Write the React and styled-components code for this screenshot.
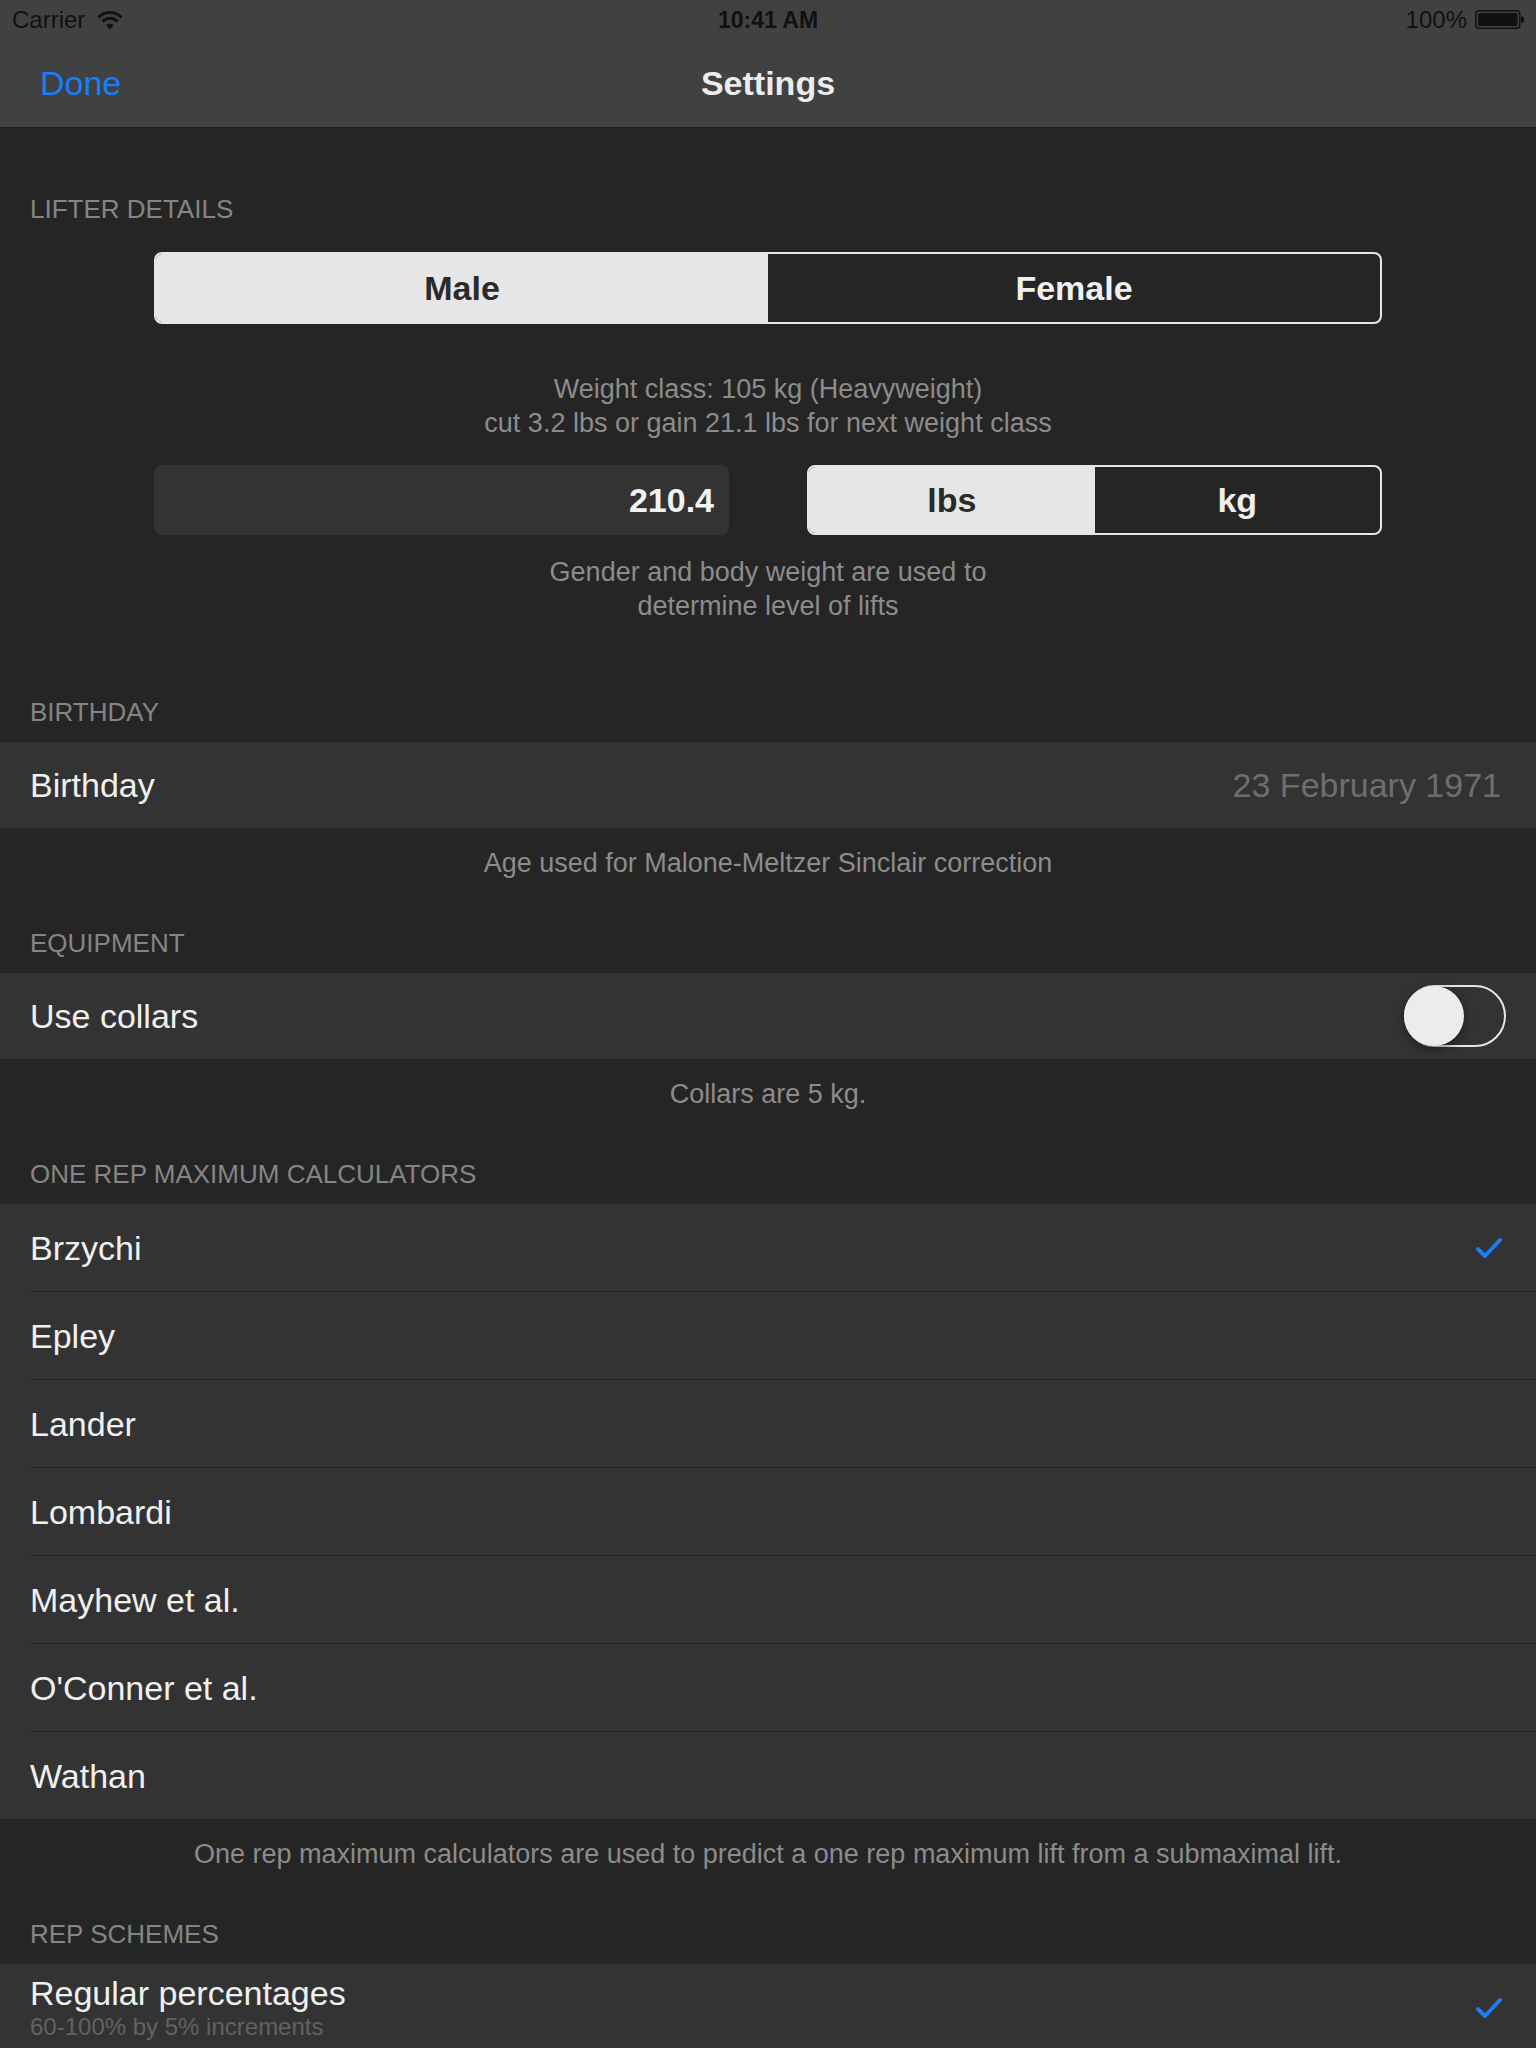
import React from 'react';
import styled, { createGlobalStyle } from 'styled-components';

const GlobalStyle = createGlobalStyle`
  html, body {
    margin: 0;
    padding: 0;
    background: #252525;
  }
  body {
    font-family: "Liberation Sans", Arial, sans-serif;
    -webkit-font-smoothing: antialiased;
  }
`;

const calculators = [
    { name: 'Brzychi', checked: true },
    { name: 'Epley' },
    { name: 'Lander' },
    { name: 'Lombardi' },
    { name: 'Mayhew et al.' },
    { name: "O'Conner et al." },
    { name: 'Wathan' },
];

const WifiIcon = () => (
    <svg width="26" height="19" viewBox="0 0 26 19">
        <path d="M1.5 6.5 A16 16 0 0 1 24.5 6.5" fill="none" stroke="#111" strokeWidth="3" />
        <path d="M5.5 10.5 A10.5 10.5 0 0 1 20.5 10.5" fill="none" stroke="#111" strokeWidth="3" />
        <path d="M9.3 14.2 A5 5 0 0 1 16.7 14.2 L13 18.5 Z" fill="#111" />
    </svg>
);

const Battery = () => (
    <svg width="49" height="20" viewBox="0 0 49 20">
        <rect x="0.75" y="0.75" width="44" height="17.5" rx="3" fill="none" stroke="#111" strokeWidth="1.5" />
        <rect x="3" y="3" width="39.5" height="13" rx="1.5" fill="#111" />
        <path d="M46 6.5 h1.5 a1.5 1.5 0 0 1 1.5 1.5 v3 a1.5 1.5 0 0 1 -1.5 1.5 h-1.5 z" fill="#111" />
    </svg>
);

const Check = () => (
    <svg width="28" height="22" viewBox="0 0 28 22">
        <path d="M3 12 L10 19 L25 3" fill="none" stroke="#1a7ff5" strokeWidth="4" strokeLinecap="round" strokeLinejoin="round" />
    </svg>
);

const App = () => {
    return (
        <Page>
            <GlobalStyle />
            <TopBar>
                <StatusBar>
                    <StatusLeft>
                        Carrier <WifiIcon />
                    </StatusLeft>
                    <Clock>10:41 AM</Clock>
                    <StatusRight>
                        100% <Battery />
                    </StatusRight>
                </StatusBar>
                <NavBar>
                    <NavButton>Done</NavButton>
                    <NavTitle>Settings</NavTitle>
                    <span />
                </NavBar>
            </TopBar>

            <SectionHeader first>LIFTER DETAILS</SectionHeader>
            <Lifter>
                <Segmented height={72}>
                    <Segment selected>Male</Segment>
                    <Segment>Female</Segment>
                </Segmented>
                <Note spacing={48}>
                    Weight class: 105 kg (Heavyweight)
                    <br />
                    cut 3.2 lbs or gain 21.1 lbs for next weight class
                </Note>
                <WeightRow>
                    <WeightField>210.4</WeightField>
                    <Segmented height={70}>
                        <Segment selected>lbs</Segment>
                        <Segment>kg</Segment>
                    </Segmented>
                </WeightRow>
                <Note spacing={20}>
                    Gender and body weight are used to
                    <br />
                    determine level of lifts
                </Note>
            </Lifter>

            <SectionHeader>BIRTHDAY</SectionHeader>
            <Row>
                <RowInner height={86}>
                    <RowLabel>Birthday</RowLabel>
                    <RowValue>23 February 1971</RowValue>
                </RowInner>
            </Row>
            <SectionFooter>Age used for Malone-Meltzer Sinclair correction</SectionFooter>

            <SectionHeader>EQUIPMENT</SectionHeader>
            <Row>
                <RowInner height={86}>
                    <RowLabel>Use collars</RowLabel>
                    <Toggle>
                        <Knob />
                    </Toggle>
                </RowInner>
            </Row>
            <SectionFooter>Collars are 5 kg.</SectionFooter>

            <SectionHeader>ONE REP MAXIMUM CALCULATORS</SectionHeader>
            <Group>
                {calculators.map((c, i) => (
                    <Row key={c.name}>
                        <RowInner height={87} divider={i > 0}>
                            <RowLabel>{c.name}</RowLabel>
                            {c.checked && <Check />}
                        </RowInner>
                    </Row>
                ))}
            </Group>
            <SectionFooter>
                One rep maximum calculators are used to predict a one rep maximum lift from a submaximal lift.
            </SectionFooter>

            <SectionHeader>REP SCHEMES</SectionHeader>
            <Group>
                <Row>
                    <RowInner height={87}>
                        <TwoLine>
                            <RowLabel>Regular percentages</RowLabel>
                            <RowSub>60-100% by 5% increments</RowSub>
                        </TwoLine>
                        <Check />
                    </RowInner>
                </Row>
            </Group>
        </Page>
    );
};

const Page = styled.div`
    width: 1536px;
    height: 2048px;
    background: #252525;
    color: #f0f0f0;
    overflow: hidden;
`;

const TopBar = styled.header`
    background: #414141;
    border-bottom: 1px solid #1e1e1e;
`;

const StatusBar = styled.div`
    height: 40px;
    display: grid;
    grid-template-columns: 1fr auto 1fr;
    align-items: center;
    padding: 0 12px;
    font-size: 24px;
    color: #111;
`;

const StatusLeft = styled.div`
    display: flex;
    align-items: center;
    gap: 12px;
`;

const Clock = styled.div`
    font-weight: bold;
    font-size: 23px;
`;

const StatusRight = styled.div`
    display: flex;
    align-items: center;
    justify-content: flex-end;
    gap: 8px;
`;

const NavBar = styled.div`
    height: 87px;
    display: grid;
    grid-template-columns: 1fr auto 1fr;
    align-items: center;
    padding: 0 40px;
`;

const NavButton = styled.div`
    font-size: 34px;
    color: #157efb;
`;

const NavTitle = styled.div`
    font-size: 34px;
    font-weight: bold;
    color: #ececec;
`;

const SectionHeader = styled.div`
    padding: ${({ first }) => (first ? '64px' : '46px')} 30px 13px;
    font-size: 26px;
    line-height: 34px;
    color: #858585;
`;

const SectionFooter = styled.div`
    padding: 18px 30px 0;
    font-size: 27px;
    line-height: 34px;
    text-align: center;
    color: #8c8c8c;
`;

const Lifter = styled.div`
    width: 1228px;
    margin: 0 auto;
    padding: 13px 0 26px;
    display: flex;
    flex-direction: column;
`;

const Segmented = styled.div`
    height: ${({ height }) => height}px;
    box-sizing: border-box;
    border: 2px solid #e6e6e6;
    border-radius: 8px;
    overflow: hidden;
    display: grid;
    grid-template-columns: 1fr 1fr;
`;

const Segment = styled.div`
    display: flex;
    align-items: center;
    justify-content: center;
    font-size: 34px;
    font-weight: bold;
    background: ${({ selected }) => (selected ? '#e6e6e6' : 'transparent')};
    color: ${({ selected }) => (selected ? '#2a2a2a' : '#f0f0f0')};
`;

const Note = styled.p`
    margin: ${({ spacing }) => spacing}px 0 0;
    font-size: 27px;
    line-height: 34px;
    text-align: center;
    color: #8c8c8c;
`;

const WeightRow = styled.div`
    margin-top: 25px;
    display: grid;
    grid-template-columns: 1fr 1fr;
    gap: 78px;
`;

const WeightField = styled.div`
    height: 70px;
    border-radius: 8px;
    background: #333333;
    display: flex;
    align-items: center;
    justify-content: flex-end;
    padding: 0 15px;
    font-size: 34px;
    font-weight: bold;
    color: #f2f2f2;
`;

const Group = styled.div`
    background: #333333;
`;

const Row = styled.div`
    background: #333333;
    padding-left: 30px;
`;

const RowInner = styled.div`
    height: ${({ height }) => height}px;
    display: flex;
    align-items: center;
    justify-content: space-between;
    padding-right: 33px;
    border-top: ${({ divider }) => (divider ? '1px solid #262626' : 'none')};
`;

const RowLabel = styled.div`
    font-size: 34px;
    line-height: 38px;
    color: #f0f0f0;
`;

const RowValue = styled.div`
    font-size: 34px;
    color: #6e6e6e;
    margin-right: 2px;
`;

const TwoLine = styled.div`
    display: flex;
    flex-direction: column;
`;

const RowSub = styled.div`
    font-size: 24px;
    line-height: 30px;
    color: #626262;
`;

const Toggle = styled.div`
    width: 102px;
    height: 62px;
    box-sizing: border-box;
    border: 2px solid #e6e6e6;
    border-radius: 31px;
    display: flex;
    align-items: center;
    margin-right: -3px;
`;

const Knob = styled.div`
    width: 60px;
    height: 60px;
    margin-left: -2px;
    border-radius: 50%;
    background: #ececec;
    box-shadow: 0 3px 8px rgba(0, 0, 0, 0.45);
`;

export default App;
